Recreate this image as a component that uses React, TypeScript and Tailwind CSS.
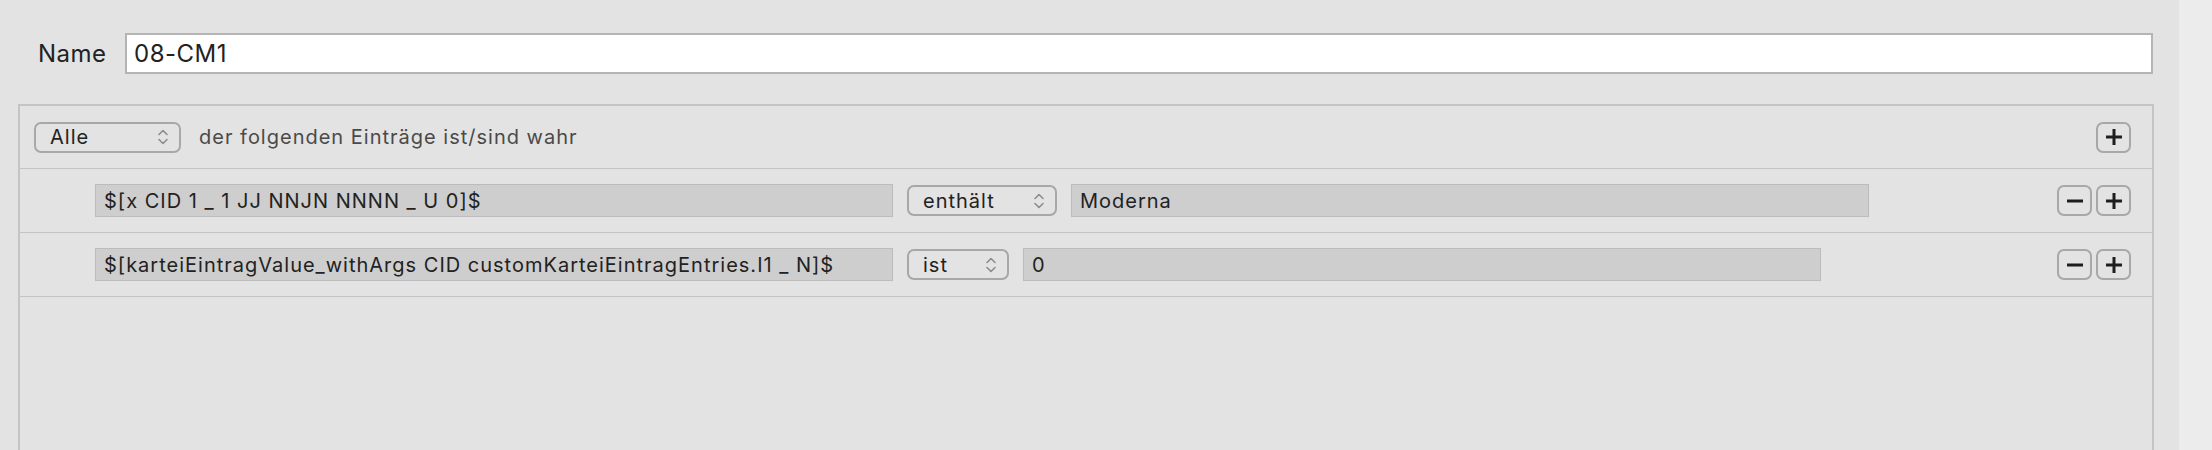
import React from 'react';

const font = { fontFamily: 'Inter, "Noto Sans", sans-serif' };

function Chevrons() {
    return (
        <svg width="12" height="20" viewBox="0 0 12 20" fill="none" stroke="#8c8c8c" strokeWidth="1.6" strokeLinecap="round" strokeLinejoin="round">
            <path d="M2 7.5 L6 3.5 L10 7.5" />
            <path d="M2 12.5 L6 16.5 L10 12.5" />
        </svg>
    );
}

function Popup({ label, width }: { label: string; width: string }) {
    return (
        <div className={`${width} h-[31px] flex items-center justify-between pl-[14px] pr-[10px] border-2 border-[#a8a8a8] rounded-[7px] text-[20px] tracking-[1px] text-[#222]`}>
            <span>{label}</span>
            <Chevrons />
        </div>
    );
}

function SquareButton({ kind }: { kind: 'plus' | 'minus' }) {
    return (
        <div className="w-[35px] h-[31px] flex items-center justify-center border-2 border-[#a8a8a8] rounded-[7px]">
            <svg width="18" height="18" viewBox="0 0 18 18" fill="#1e1e1e">
                <rect x="1" y="7.5" width="16" height="3" />
                {kind === 'plus' && <rect x="7.5" y="1" width="3" height="16" />}
            </svg>
        </div>
    );
}

function Field({ value, width }: { value: string; width: string }) {
    return (
        <div className={`${width} h-[33px] flex items-center pl-[8px] bg-[#cecece] border border-[#bcbcbc] text-[20px] tracking-[1px] text-[#222] whitespace-nowrap overflow-hidden`}>
            {value}
        </div>
    );
}

interface Rule {
    key: string;
    op: string;
    opWidth: string;
    value: string;
}

const rules: Rule[] = [
    { key: '$[x CID 1 _ 1 JJ NNJN NNNN _ U 0]$', op: 'enthält', opWidth: 'w-[150px]', value: 'Moderna' },
    { key: '$[karteiEintragValue_withArgs CID customKarteiEintragEntries.I1 _ N]$', op: 'ist', opWidth: 'w-[102px]', value: '0' },
];

export default function App() {
    return (
        <div className="w-[2212px] h-[450px] flex overflow-hidden bg-[#e3e3e3]" style={font}>
            <div className="w-[2179px] flex flex-col">
                {/* Name row */}
                <div className="flex items-center mt-[33px] pl-[38px]">
                    <span className="w-[87px] text-[24px] tracking-[0.5px] text-[#222]">Name</span>
                    <div className="w-[2028px] h-[41px] flex items-center pl-[7px] bg-white border-2 border-[#b4b4b4] text-[24px] tracking-[0.5px] text-[#222]">
                        08-CM1
                    </div>
                </div>

                {/* Rules panel */}
                <div className="mt-[30px] ml-[18px] w-[2136px] flex-1 border-2 border-b-0 border-[#c4c4c4]">
                    <div className="h-[63px] flex items-center pl-[14px] pr-[21px] border-b border-[#c4c4c4]">
                        <Popup label="Alle" width="w-[147px]" />
                        <span className="ml-[18px] text-[20px] tracking-[1px] text-[#4a4a4a]">der folgenden Einträge ist/sind wahr</span>
                        <div className="ml-auto">
                            <SquareButton kind="plus" />
                        </div>
                    </div>
                    {rules.map((r, i) => (
                        <div key={i} className="h-[64px] flex items-center pl-[75px] pr-[21px] border-b border-[#c4c4c4]">
                            <Field value={r.key} width="w-[798px]" />
                            <div className="ml-[14px]">
                                <Popup label={r.op} width={r.opWidth} />
                            </div>
                            <div className="ml-[14px]">
                                <Field value={r.value} width="w-[798px]" />
                            </div>
                            <div className="ml-auto flex gap-[4px]">
                                <SquareButton kind="minus" />
                                <SquareButton kind="plus" />
                            </div>
                        </div>
                    ))}
                </div>
            </div>
            <div className="flex-1 bg-[#ececec]" />
        </div>
    );
}
